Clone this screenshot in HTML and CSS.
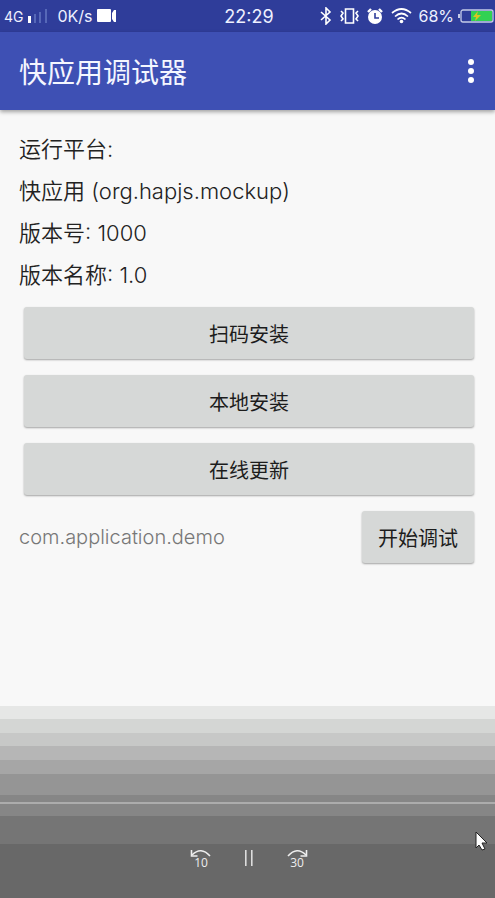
FILE: index.html
```html
<!DOCTYPE html>
<html lang="zh-CN">
<head>
    <meta charset="UTF-8">
    <meta name="viewport" content="width=device-width, initial-scale=1.0">
    <title>快应用调试器</title>
    <link rel="stylesheet" href="styles.css">
</head>
<body>
    <div class="status-bar">
        <div class="status-left">
            <span class="network">4G</span>
            <svg class="signal" width="20" height="14" viewBox="0 0 20 14">
                <path fill="#fff" d="M0 7h3v7H0z"/>
                <path fill="#5668b8" d="M6 5h2v9H6zM11 3h2v11h-2zM17 0h2v14h-2z"/>
            </svg>
            <span class="speed">0K/s</span>
            <svg width="20" height="14" viewBox="0 0 20 14" fill="#fff">
                <rect width="14" height="13" rx="1"/>
                <path d="M15 4l2-3h2v12h-2l-2-3z"/>
            </svg>
        </div>
        <div class="clock">22:29</div>
        <div class="status-right">
            <svg width="12" height="18" viewBox="0 0 12 18" fill="none" stroke="#fff" stroke-width="1.6">
                <path d="M1 5l9 8-4 4V1l4 4-9 8"/>
            </svg>
            <svg width="19" height="16" viewBox="0 0 19 16" fill="none" stroke="#fff" stroke-width="1.6">
                <path d="M5.500 1h8v14h-8z"/>
                <path d="M1 3l2 2-2 3 2 3-2 2M18 3l-2 2 2 3-2 3 2 2"/>
            </svg>
            <svg width="16" height="16" viewBox="0 0 16 16">
                <circle cx="8" cy="9" r="7" fill="#fff"/>
                <path d="M1 4l3-3M15 4l-3-3" stroke="#fff" stroke-width="2.400"/>
                <path d="M8 5v5h4" fill="none" stroke="#2f3d9a" stroke-width="1.600"/>
            </svg>
            <svg width="21" height="16" viewBox="0 0 21 16" fill="none" stroke="#fff" stroke-width="1.700">
                <path d="M1 5q9.500-8 19 0M4 8.500q6.500-6 13 0M6.500 11.500q4-4 8 0"/>
                <circle cx="10.500" cy="13.500" r="1.800" fill="#fff" stroke="none"/>
            </svg>
            <span class="percent">68%</span>
            <svg width="36" height="14" viewBox="0 0 36 14">
                <path d="M0 5h2v4H0z" fill="#c5cbe8"/>
                <rect x="3" y="1" width="32" height="12" rx="2" fill="none" stroke="#c5cbe8" stroke-width="1.300"/>
                <path d="M13 2h21v10H13z" fill="#32d153"/>
                <path d="M20 2l-5 6h3l-1 4 6-6h-4z" fill="#d8c522"/>
            </svg>
        </div>
    </div>

    <header class="toolbar">
        <h1>快应用调试器</h1>
        <button class="menu-button" aria-label="更多">
            <svg width="6" height="24" viewBox="0 0 6 24" fill="#fff">
                <circle cx="3" cy="3" r="3"/>
                <circle cx="3" cy="12" r="3"/>
                <circle cx="3" cy="21" r="3"/>
            </svg>
        </button>
    </header>

    <main class="content">
        <div class="info">
            <p>运行平台:</p>
            <p>快应用 (org.hapjs.mockup)</p>
            <p>版本号: 1000</p>
            <p>版本名称: 1.0</p>
        </div>
        <div class="actions">
            <button class="btn">扫码安装</button>
            <button class="btn">本地安装</button>
            <button class="btn">在线更新</button>
        </div>
        <div class="debug-row">
            <input class="package" type="text" placeholder="com.application.demo" aria-label="包名">
            <button class="btn">开始调试</button>
        </div>
    </main>

    <div class="player">
        <input class="seek" type="range" min="0" max="100" value="0" aria-label="播放进度">
        <div class="controls">
            <button class="control" aria-label="后退 10 秒">
                <svg width="22" height="24" viewBox="0 0 22 24">
                    <path d="M2 7Q11-2 20 8" fill="none" stroke="#eee" stroke-width="1.600"/>
                    <path d="M1.500 2v6h6" fill="none" stroke="#eee" stroke-width="1.600"/>
                    <text x="11" y="19" text-anchor="middle">10</text>
                </svg>
            </button>
            <button class="control" aria-label="暂停">
                <svg width="22" height="24" viewBox="0 0 22 24" fill="#ddd">
                    <path d="M7 2h1.600v16H7zM13 2h1.600v16H13z"/>
                </svg>
            </button>
            <button class="control" aria-label="前进 30 秒">
                <svg width="22" height="24" viewBox="0 0 22 24">
                    <path d="M2 8Q11-2 20 7" fill="none" stroke="#eee" stroke-width="1.600"/>
                    <path d="M20.500 2v6h-6" fill="none" stroke="#eee" stroke-width="1.600"/>
                    <text x="11" y="19" text-anchor="middle">30</text>
                </svg>
            </button>
        </div>
        <svg class="pointer" width="13" height="20" viewBox="0 0 13 20">
            <path d="M1 1v16l3-3 3 5 3-1-3-6h5z" fill="#fff" stroke="#222" stroke-width="1"/>
        </svg>
    </div>
</body>
</html>
```
FILE: styles.css
```css
* {
    box-sizing: border-box;
}
body {
    display: flex;
    flex-direction: column;
    min-height: 100vh;
    margin: 0;
    background: #f8f8f8;
    color: #222;
    font-family: Inter, "Noto Sans CJK SC", sans-serif;
}
svg {
    display: block;
    flex-shrink: 0;
}
button {
    font-family: inherit;
    border: none;
    cursor: pointer;
}
.status-bar {
    display: flex;
    align-items: center;
    height: 32px;
    padding: 0 1px 0 4px;
    background: #2f3d9a;
    color: #eef0ff;
    font-size: 16px;
}
.status-left,
.status-right {
    display: flex;
    flex: 1;
    align-items: center;
}
.status-right {
    justify-content: flex-end;
    gap: 8px;
}
.network {
    font-size: 14px;
}
.signal {
    margin: 0 10px 0 4px;
}
.speed {
    margin-right: 4px;
}
.clock {
    font-size: 18px;
}
.percent {
    margin: 0 -4px 0 -2px;
}
.toolbar {
    display: flex;
    align-items: center;
    justify-content: space-between;
    height: 78px;
    padding: 0 21px 0 19px;
    background: #3e50b4;
    color: #f4f6ff;
    box-shadow: 0 2px 4px rgba(0, 0, 0, 0.35);
}
.toolbar h1 {
    margin: 0;
    font-size: 28px;
    font-weight: 400;
}
.menu-button {
    padding: 0;
    background: none;
}
.content {
    padding: 18px 21px 40px 19px;
}
.info p {
    margin: 0;
    font-size: 22px;
    font-weight: 350;
    line-height: 42px;
}
.actions {
    display: flex;
    flex-direction: column;
    gap: 16px;
    margin: 11px 0 16px 5px;
}
.btn {
    height: 52px;
    padding: 0 16px;
    background: #d6d8d7;
    color: #1c1c1c;
    font-size: 20px;
    border-radius: 3px;
    box-shadow: 0 1px 2px rgba(0, 0, 0, 0.35);
}
.debug-row {
    display: flex;
    align-items: center;
    gap: 16px;
}
.package {
    flex: 1;
    min-width: 0;
    padding: 0;
    background: none;
    border: none;
    outline: none;
    color: #777;
    font-family: inherit;
    font-size: 20px;
    font-weight: 300;
}
.package::placeholder {
    color: #777;
}
.player {
    position: relative;
    height: 192px;
    margin-top: auto;
    padding-top: 96px;
    background: linear-gradient(
        #e6e7e6 13px,
        #d4d6d4 13px 27px,
        #c7c8c7 27px 40px,
        #b6b6b6 40px 54px,
        #a6a6a6 54px 68px,
        #959595 68px 89px,
        #868686 89px 110px,
        #757575 110px 138px,
        #686868 138px
    );
}
.seek {
    display: block;
    width: 100%;
    height: 2px;
    margin: 0;
    background: #acacac;
    appearance: none;
}
.seek::-webkit-slider-thumb {
    width: 0;
    height: 0;
    appearance: none;
}
.controls {
    display: flex;
    justify-content: center;
    gap: 26px;
    padding: 44px 0 0 2px;
}
.control {
    padding: 0;
    background: none;
}
.control text {
    fill: #eee;
    font-family: "Open Sans", sans-serif;
    font-size: 12px;
}
.pointer {
    position: absolute;
    top: 125px;
    right: 7px;
}
```
